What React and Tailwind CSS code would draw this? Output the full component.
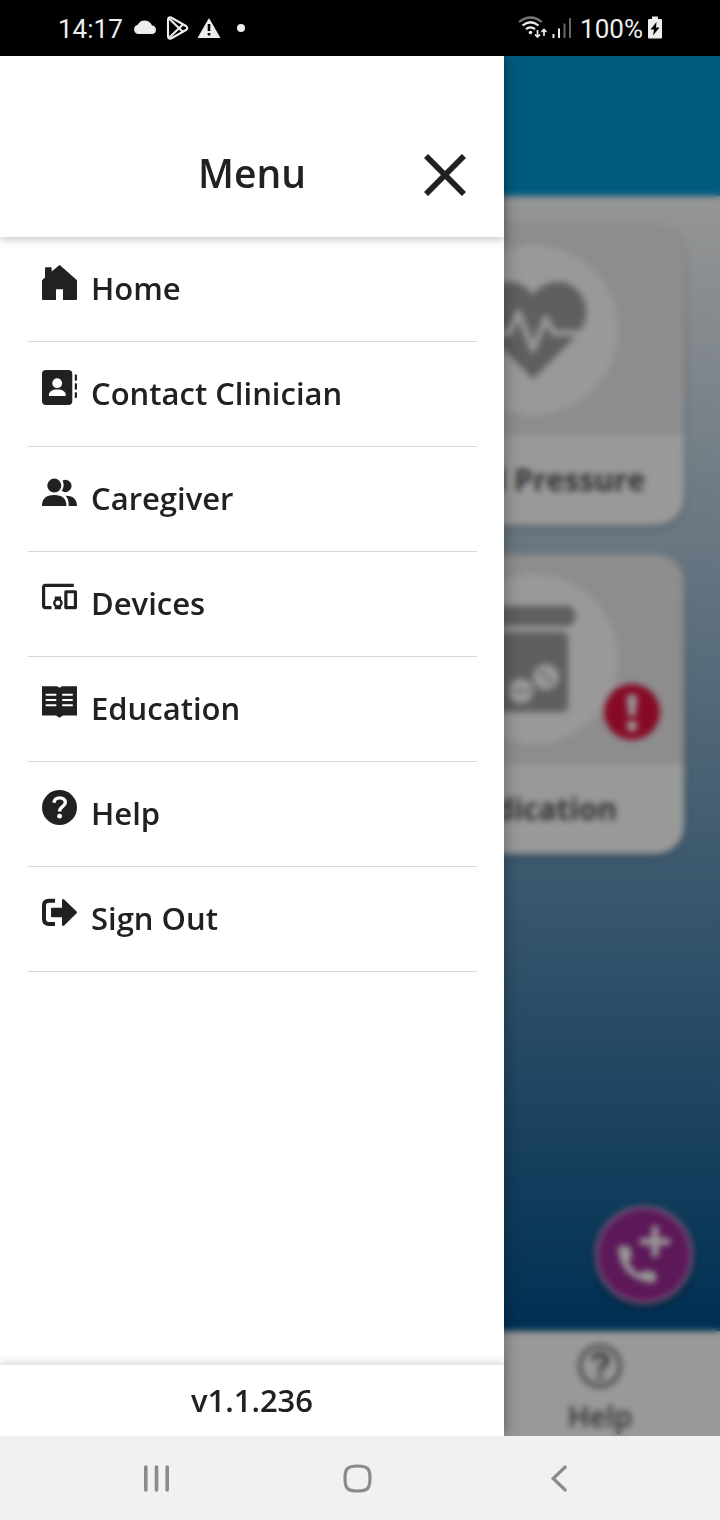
import React from "react";

function HomeIcon() {
  return (
    <svg className="size-[35px] shrink-0" viewBox="0 0 35 35" fill="currentColor" aria-hidden="true">
      <path d="M0 15.3 3 12.6V3.2Q3 2.3 3.9 2.3H8.8Q9.7 2.3 9.7 3.2V6.4L16.9.4Q17.6-.2 18.3.4L35 15.2V34Q35 35 34 35H21V24.3H14V35H1Q0 35 0 34Z" />
    </svg>
  );
}

function ContactIcon() {
  return (
    <svg className="size-[35px] shrink-0" viewBox="0 0 35 35" fill="currentColor" aria-hidden="true">
      <rect width="30.3" height="35" rx="4" />
      <circle cx="15.2" cy="13.2" r="4.9" fill="#fff" />
      <path d="M7 26V24.6C7 21.4 10.2 19.4 15.3 19.4S23.7 21.4 23.7 24.6V26Z" fill="#fff" />
      <path d="M32.8 4.6h1.6l.6.6v4.4l-.6 1.2h-1.6zM32.8 13.2h1.6l.6.9v4.6l-.6 1h-1.6zM32.8 22.2h1.6l.6.9v4l-.6 1h-1.6z" />
    </svg>
  );
}

function CaregiverIcon() {
  return (
    <svg className="size-[35px] shrink-0" viewBox="0 0 35 35" fill="currentColor" aria-hidden="true">
      <path d="M20.6 5.5a6.1 6.1 0 1 1-.9 10.3c2.2-3 2.6-7 .9-10.3Z" />
      <path d="M23.6 20.8C31 20.5 35 24.5 35 31H26.7C26.8 26.6 25.9 23.3 23.6 20.8Z" />
      <circle cx="12.3" cy="10.6" r="7" />
      <path d="M0 31C0 23.5 4 20 12.2 20S24.4 23.5 24.4 31Z" />
    </svg>
  );
}

function DevicesIcon() {
  return (
    <svg className="size-[35px] shrink-0" viewBox="1 1.6 22 22" fill="currentColor" aria-hidden="true">
      <path d="M3 6h18V4H3c-1.1 0-2 .9-2 2v12c0 1.1.9 2 2 2h4v-2H3V6zm10 6H9v1.78c-.61.55-1 1.33-1 2.22s.39 1.67 1 2.22V20h4v-1.78c.61-.55 1-1.34 1-2.22s-.39-1.67-1-2.22V12zm-2 5.5c-.83 0-1.5-.67-1.5-1.5s.67-1.5 1.5-1.5 1.5.67 1.5 1.5-.67 1.5-1.5 1.5zM22 8h-6c-.5 0-1 .5-1 1v10c0 .5.5 1 1 1h6c.5 0 1-.5 1-1V9c0-.5-.5-1-1-1zm-1 10h-4v-8h4v8z" />
    </svg>
  );
}

function EducationIcon() {
  return (
    <svg className="size-[35px] shrink-0" viewBox="0 0 35 35" fill="currentColor" aria-hidden="true">
      <path d="M0 1.2H15L17.5 2.7 20 1.2H35V30.4H21L17.5 32.8 14 30.4H0Z" />
      <path d="M4.5 9.7H13.5M4.5 15H13.5M4.5 20.3H13.5M21 9.7H30M21 15H30M21 20.3H30" stroke="#fff" strokeWidth="2" strokeLinecap="round" />
    </svg>
  );
}

function HelpIcon() {
  return (
    <svg className="size-[35px] shrink-0" viewBox="0 0 35 35" aria-hidden="true">
      <circle cx="17.5" cy="17.5" r="17.5" fill="currentColor" />
      <path d="M11.9 12.7C12.4 9.5 14.4 7.9 17.7 7.9C21 7.9 23.3 9.6 23.3 12.4C23.3 16.5 17.6 16.6 17.6 21.4" fill="none" stroke="#fff" strokeWidth="3.4" />
      <circle cx="17.6" cy="26.2" r="2.4" fill="#fff" />
    </svg>
  );
}

function SignOutIcon() {
  return (
    <svg className="size-[35px] shrink-0" viewBox="0 0 35 35" aria-hidden="true">
      <path d="M13 5.7H7Q2 5.7 2 10.7V24Q2 29 7 29H13" fill="none" stroke="currentColor" strokeWidth="4" />
      <path d="M10 12.8H20V5Q20.3 3.3 22.2 4.4L34.6 16.6Q35.2 17.4 34.6 18.2L22.2 30.4Q20.3 31.6 20 29.8V22.2H10Q9 22.2 9 21.2V13.8Q9 12.8 10 12.8Z" fill="currentColor" />
    </svg>
  );
}

const menuItems = [
  { label: "Home", Icon: HomeIcon },
  { label: "Contact Clinician", Icon: ContactIcon },
  { label: "Caregiver", Icon: CaregiverIcon },
  { label: "Devices", Icon: DevicesIcon },
  { label: "Education", Icon: EducationIcon },
  { label: "Help", Icon: HelpIcon },
  { label: "Sign Out", Icon: SignOutIcon },
];

function StatusBar() {
  return (
    <div className="flex h-14 shrink-0 items-center justify-between bg-black pr-[57px] pl-[58px] font-['Roboto',sans-serif] text-[26px] leading-8 text-[#ededed]">
      <div className="flex items-center">
        <span className="pt-0.5">14:17</span>
        <svg className="ml-2 h-7 w-29" viewBox="0 0 116 28" fill="#ededed" aria-hidden="true">
          <path d="M7 20A4.7 4.7 0 0 1 6.7 10.8 7.8 7.8 0 0 1 21 11.5 4.3 4.3 0 0 1 21.5 20Z" />
          <g fill="none" stroke="#ededed" strokeWidth="2.1" strokeLinejoin="round">
            <path d="M37 5.5V22.5Q37.3 25.5 40 24.5L55 16Q57.5 14.3 55 12L40 3.5Q37.3 2.5 37 5.5Z" />
            <path d="M38 4.5 52 18M38 23.8 52 10.5" />
          </g>
          <path d="M78 4 89.500 24H66.500Z" />
          <path d="M78 10V17M78 19V21.5" stroke="#000" strokeWidth="2.6" />
          <circle cx="110" cy="14" r="4" />
        </svg>
      </div>
      <div className="flex items-center">
        <svg className="mr-2 h-7 w-14" viewBox="0 0 56 28" fill="none" aria-hidden="true">
          <path d="M3 8Q14.5-1 26 8" stroke="#777" strokeWidth="2.2" />
          <path d="M6.5 11.5Q14.5 5 22.5 11.5M10 15.2Q14.5 11.5 19 15.2" stroke="#ededed" strokeWidth="2.2" />
          <circle cx="14.5" cy="18.5" r="1.8" fill="#ededed" />
          <path d="M21.5 16V22.5M19 20.5 21.5 23 24 20.5M28 22V16M25.5 18 28 15.5 30.5 18" stroke="#ededed" strokeWidth="1.7" />
          <path d="M37.500 20V24M43 14.5V24" stroke="#ededed" strokeWidth="2" />
          <path d="M48.500 9.5V24M54 4V24" stroke="#666" strokeWidth="2" />
        </svg>
        <span className="pt-0.5">100%</span>
        <svg className="ml-1 h-6 w-4" viewBox="0 0 16 24" aria-hidden="true">
          <path d="M5 .5H11V3H14Q15 3 15 4V21.5Q15 22.5 14 22.5H2Q1 22.5 1 21.5V4Q1 3 2 3H5Z" fill="#ededed" />
          <path d="M9.5 6 3.5 13.5H7L6 19.5 12.5 11.5H9Z" fill="#000" />
        </svg>
      </div>
    </div>
  );
}

function HealthCard({ label, children, alert }) {
  return (
    <article className="col-start-2 overflow-hidden rounded-[28px] bg-white shadow-[0_3px_8px_rgba(0,0,0,0.2)]">
      <div className="relative flex h-[210px] items-center justify-center bg-[#ebebeb]">
        <div className="flex size-[170px] items-center justify-center rounded-full bg-white">{children}</div>
        {alert && (
          <svg className="absolute right-6 bottom-6 size-14" viewBox="0 0 56 56" aria-label="Needs attention">
            <circle cx="28" cy="28" r="28" fill="#e01040" />
            <path d="M22.5 11H33.5L31.5 32H24.5Z" fill="#fff" />
            <circle cx="28" cy="42" r="5.5" fill="#fff" />
          </svg>
        )}
      </div>
      <h2 className="text-center text-[30px] leading-[90px] font-bold whitespace-nowrap text-[#555]">{label}</h2>
    </article>
  );
}

function Dashboard() {
  return (
    <div className="flex min-w-0 flex-1 flex-col">
      <div className="h-[140px] shrink-0 bg-[#0098d5]" />
      <section className="relative flex-1 bg-[linear-gradient(to_bottom,#fafafa,#00508c)] px-9 pt-[29px]">
        <div className="grid grid-cols-2 gap-x-11 gap-y-[29px]">
          <HealthCard label="Blood Pressure">
            <svg className="h-[100px] w-[108px]" viewBox="0 0 110 102" aria-hidden="true">
              <path d="M55 101 11 57C-20 22 26-20 55 15C84-20 130 22 99 57Z" fill="#9e9e9e" />
              <path d="M0 54H31L40 33 55 71 68 39 76 54H110" fill="none" stroke="#fff" strokeWidth="6" strokeLinejoin="round" />
            </svg>
          </HealthCard>
          <HealthCard label="Medication" alert>
            <svg className="h-[106px] w-[84px]" viewBox="0 0 84 106" aria-hidden="true">
              <rect width="84" height="20" rx="8" fill="#9e9e9e" />
              <rect x="7" y="26" width="70" height="80" rx="5" fill="#9e9e9e" />
              <circle cx="30" cy="85" r="12.5" fill="#fff" />
              <circle cx="55" cy="71" r="13" fill="#fff" />
              <path d="M20 85H40M48 64 62 78" stroke="#9e9e9e" strokeWidth="2" />
            </svg>
          </HealthCard>
        </div>
        <button
          type="button"
          aria-label="Add call"
          className="absolute right-[27px] bottom-[27px] flex size-[98px] items-center justify-center rounded-full border-[3px] border-[#d9a5d8] bg-[#992893] text-white shadow-[0_3px_8px_rgba(0,0,0,0.5)]"
        >
          <svg className="size-[60px]" viewBox="0 0 60 60" fill="currentColor" aria-hidden="true">
            <path d="M37.5 1H44.5V13H56V20H44.5V32H37.5V20H26V13H37.5Z" />
            <path d="M6 21H14Q16 21 16.5 24Q17 29 18 32L14 37Q19 45 26 49L31 45Q36 47 40 47Q42 47 42 49V56Q42 58 40 58Q6 55 4 23Q4 21 6 21Z" />
          </svg>
        </button>
      </section>
      <nav className="grid h-[105px] shrink-0 grid-cols-3 bg-white">
        <a href="#help" className="col-start-3 flex flex-col items-center gap-2 pt-[13px] text-[29px] leading-10 font-semibold text-[#555]">
          <svg className="size-11" viewBox="0 0 44 44" fill="none" stroke="currentColor" aria-hidden="true">
            <circle cx="22" cy="22" r="20" strokeWidth="3" />
            <path d="M15.5 16.5C15.5 8.5 29 8.5 29 16C29 21.5 22 21 22 27" strokeWidth="4.6" />
            <circle cx="22" cy="33" r="1.4" strokeWidth="2.6" />
          </svg>
          Help
        </a>
      </nav>
    </div>
  );
}

function Drawer() {
  return (
    <aside className="absolute inset-y-0 left-0 flex w-[70%] flex-col bg-white font-semibold text-[#212121] shadow-[0_0_16px_rgba(0,0,0,0.35)]">
      <header className="grid grid-cols-[1fr_auto_1fr] items-center pt-[87px] pb-[34px] shadow-[0_3px_8px_rgba(0,0,0,0.2)]">
        <h1 className="col-start-2 text-[39px] leading-[60px]">Menu</h1>
        <button type="button" aria-label="Close menu" className="mr-[38px] justify-self-end pt-1">
          <svg className="size-[42px]" viewBox="0 0 42 42" fill="none" stroke="currentColor" strokeWidth="5.8" aria-hidden="true">
            <path d="M2 2 40 40M40 2 2 40" />
          </svg>
        </button>
      </header>
      <nav className="flex-1 pr-[27px] pl-7">
        <ul>
          {menuItems.map(({ label, Icon }) => (
            <li key={label} className="border-b border-[#d9d9d9]">
              <a href="#menu" className="flex h-[104px] items-start gap-3.5 px-3.5 pt-7 text-[31px] leading-[46px]">
                <Icon />
                {label}
              </a>
            </li>
          ))}
        </ul>
      </nav>
      <footer className="text-center text-[31px] leading-[71px] shadow-[0_-3px_8px_rgba(0,0,0,0.15)]">v1.1.236</footer>
    </aside>
  );
}

function SystemNav() {
  return (
    <div className="flex h-[84px] shrink-0 bg-[#f1f1f1] pr-[61px] pl-[55px] text-[#8b8b8b]">
      <button type="button" aria-label="Recent apps" className="flex flex-1 items-center justify-center">
        <svg className="size-8" viewBox="0 0 32 32" stroke="currentColor" strokeWidth="3.6" strokeLinecap="round" aria-hidden="true">
          <path d="M5.8 5V28M16.5 5V28M27.200 5V28" />
        </svg>
      </button>
      <button type="button" aria-label="Home screen" className="flex flex-1 items-center justify-center">
        <svg className="size-8" viewBox="0 0 32 32" fill="none" stroke="currentColor" strokeWidth="3.2" aria-hidden="true">
          <path d="M16.5 4C26.500 4 29 6.500 29 16.500S26.500 29 16.500 29 4 26.500 4 16.500 6.500 4 16.500 4Z" />
        </svg>
      </button>
      <button type="button" aria-label="Back" className="flex flex-1 items-center justify-center">
        <svg className="size-8" viewBox="0 0 32 32" fill="none" stroke="currentColor" strokeWidth="3.2" strokeLinecap="round" aria-hidden="true">
          <path d="M23.200 5 11.200 16.500 23.200 28" />
        </svg>
      </button>
    </div>
  );
}

export default function App() {
  return (
    <div className="flex min-h-screen flex-col font-['Open_Sans','Noto_Sans',sans-serif]">
      <StatusBar />
      <main className="relative flex flex-1 overflow-hidden">
        <Dashboard />
        <div className="absolute inset-0 bg-black/40 backdrop-blur-[3px]" />
        <Drawer />
      </main>
      <SystemNav />
    </div>
  );
}
